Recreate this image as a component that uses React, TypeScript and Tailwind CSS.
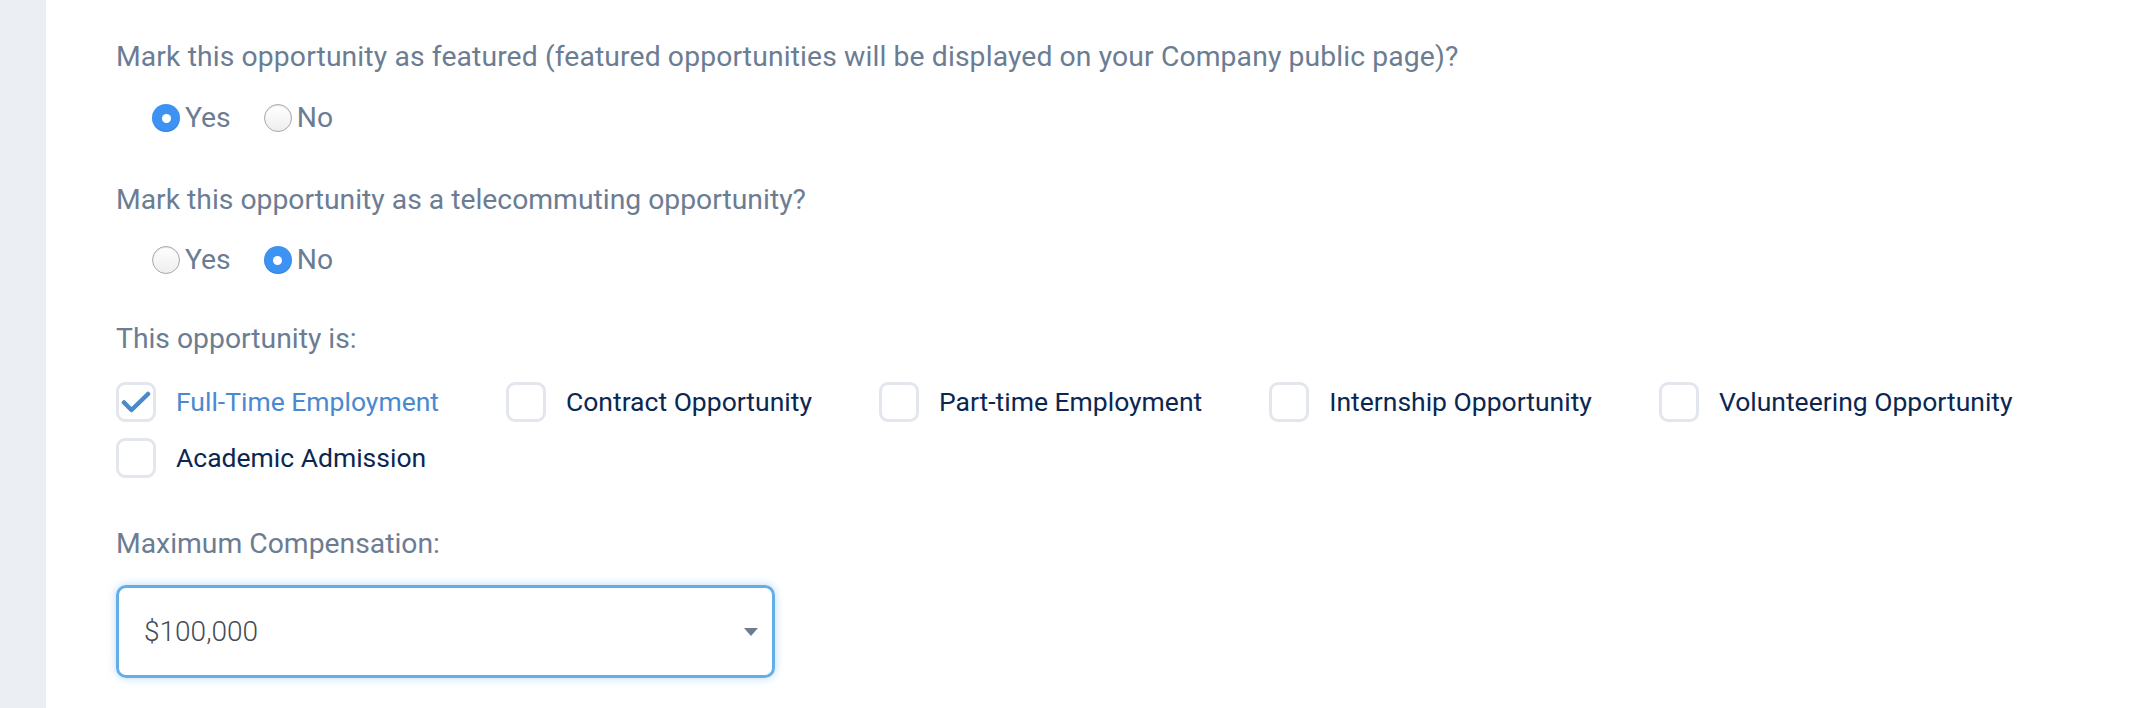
import React, { useState } from 'react';

const TYPES = [
  'Full-Time Employment',
  'Contract Opportunity',
  'Part-time Employment',
  'Internship Opportunity',
  'Volunteering Opportunity',
  'Academic Admission',
];

const Radio = ({ checked, label, onClick }: { checked: boolean; label: string; onClick: () => void }) => (
  <button type="button" onClick={onClick} className="flex items-center gap-[5px] h-10">
    {checked ? (
      <span className="w-[28px] h-[28px] rounded-full bg-[#3d93f3] flex items-center justify-center shadow-[inset_0_-1px_1px_rgba(0,0,0,0.15)]">
        <span className="w-[9px] h-[9px] rounded-full bg-white" />
      </span>
    ) : (
      <span className="w-[28px] h-[28px] rounded-full border-[1.5px] border-[#a9a9a9] bg-gradient-to-b from-white to-[#eeeeee] shadow-[inset_0_1px_1px_rgba(0,0,0,0.1)]" />
    )}
    <span className="text-[28.3px] leading-10 text-[#6b7c93]">{label}</span>
  </button>
);

const Check = ({ checked, label, onClick }: { checked: boolean; label: string; onClick: () => void }) => (
  <button type="button" onClick={onClick} className="flex items-center h-10 mr-[67px]">
    <span className="w-[40px] h-[40px] rounded-[9px] border-[3px] border-[#e3e7ed] bg-white flex items-center justify-center">
      {checked && (
        <svg width="30" height="24" viewBox="0 0 30 24" fill="none">
          <path d="M3 12.5 L10.5 20 L27 4" stroke="#4a89cd" strokeWidth="4.5" strokeLinecap="round" strokeLinejoin="round" />
        </svg>
      )}
    </span>
    <span className={`ml-[20px] text-[26.5px] leading-10 ${checked ? 'text-[#4a89cf]' : 'text-[#0b2751]'}`}>{label}</span>
  </button>
);

export default function App() {
  const [featured, setFeatured] = useState(true);
  const [remote, setRemote] = useState(false);
  const [types, setTypes] = useState<string[]>(['Full-Time Employment']);

  const toggle = (t: string) =>
    setTypes((prev) => (prev.includes(t) ? prev.filter((x) => x !== t) : [...prev, t]));

  return (
    <div className="flex w-[2144px] h-[708px] bg-white font-['Roboto',sans-serif] overflow-hidden">
      <div className="w-[46px] shrink-0 bg-[#ebeef3]" />
      <div className="flex-1 pl-[70px] pt-[37px] pr-[40px]">
        <p className="text-[28.3px] leading-10 text-[#6b7c93] tracking-[0.12px]">
          Mark this opportunity as featured (featured opportunities will be displayed on your Company public page)?
        </p>
        <div className="flex gap-[33px] pl-[36px] mt-[21px]">
          <Radio checked={featured} label="Yes" onClick={() => setFeatured(true)} />
          <Radio checked={!featured} label="No" onClick={() => setFeatured(false)} />
        </div>

        <p className="mt-[42px] text-[28.3px] leading-10 text-[#6b7c93]">
          Mark this opportunity as a telecommuting opportunity?
        </p>
        <div className="flex gap-[33px] pl-[36px] mt-[20px]">
          <Radio checked={remote} label="Yes" onClick={() => setRemote(true)} />
          <Radio checked={!remote} label="No" onClick={() => setRemote(false)} />
        </div>

        <p className="mt-[39px] text-[28.3px] leading-10 text-[#6b7c93]">This opportunity is:</p>
        <div className="flex flex-wrap gap-y-[16px] mt-[23px]">
          {TYPES.map((t) => (
            <Check key={t} checked={types.includes(t)} label={t} onClick={() => toggle(t)} />
          ))}
        </div>

        <p className="mt-[46px] text-[28.3px] leading-10 text-[#6b7c93]">Maximum Compensation:</p>
        <div className="relative mt-[21px] w-[659px] h-[93px] rounded-[10px] border-[3px] border-[#64aee8] shadow-[0_0_8px_rgba(100,174,232,0.45)] flex items-center pl-[25px]">
          <span className="text-[28px] font-light text-[#444b55]">$100,000</span>
          <svg className="absolute right-[14px] top-1/2 -translate-y-1/2" width="14" height="8" viewBox="0 0 14 8">
            <path d="M0 0 L14 0 L7 8 Z" fill="#6b7c93" />
          </svg>
        </div>
      </div>
    </div>
  );
}
